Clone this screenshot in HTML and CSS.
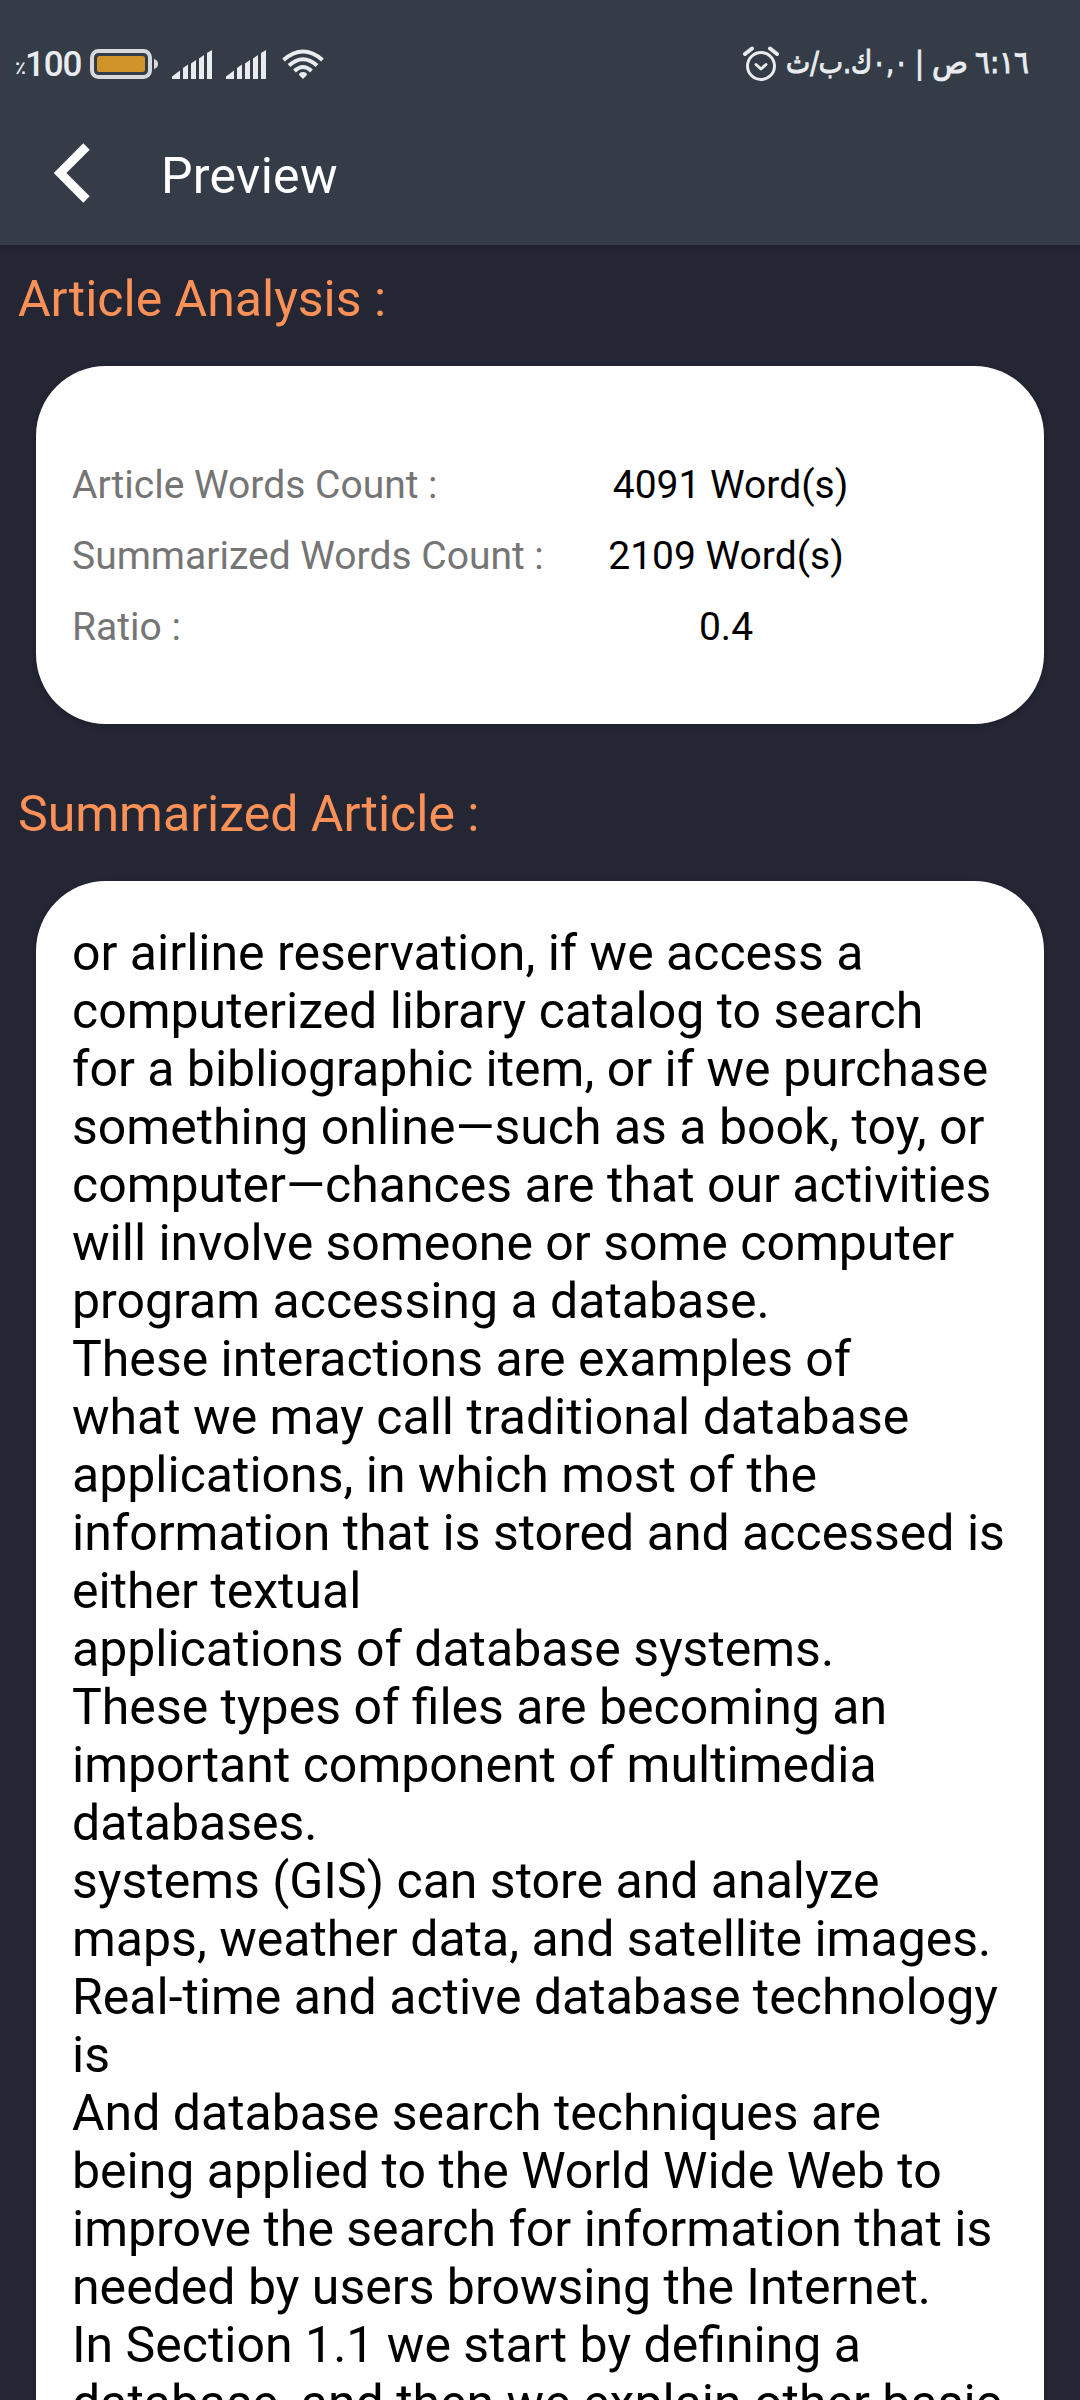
FILE: index.html
```html
<!DOCTYPE html>
<html lang="en">
<head>
<meta charset="utf-8">
<title>Preview</title>
<link rel="stylesheet" href="styles.css">
</head>
<body>
<div class="screen">
  <header class="top">
    <div class="status">
      <div class="status-left">
        <span class="percent">٪</span><span class="level">100</span>
        <svg class="battery" width="68" height="30" viewBox="0 0 68 30">
          <rect x="2" y="2" width="58" height="26" rx="6.5" fill="none" stroke="#d5d9dc" stroke-width="4"/>
          <rect x="7" y="7" width="48" height="16" rx="2.5" fill="#d09329"/>
          <path d="M64 10q4 1 4 5t-4 5z" fill="#d5d9dc"/>
        </svg>
        <svg class="signal" width="40" height="29" viewBox="0 0 40 29" fill="#e9ebee">
          <path d="M0 29v-2.500l8-6V29zM11 29V18l5-3.500V29zM19 29V13.500l5-3.500V29zM27 29V8.500l5-3.500V29zM35 29V3l5-3v29z"/>
        </svg>
        <svg class="signal" width="40" height="29" viewBox="0 0 40 29" fill="#e9ebee">
          <path d="M0 29v-2.500l8-6V29zM11 29V18l5-3.500V29zM19 29V13.500l5-3.500V29zM27 29V8.500l5-3.500V29zM35 29V3l5-3v29z"/>
        </svg>
        <svg class="wifi" width="42" height="31" viewBox="0 0 42 31" fill="none" stroke="#e9ebee" stroke-width="4">
          <path d="M1.500 11Q21-6 40.500 11M7 16.500Q21 4 35 16.500M12.500 22Q21 14 29.500 22"/>
          <path d="M21 30l-4-4q0-3 4-3t4 3z" fill="#e9ebee" stroke="none"/>
        </svg>
      </div>
      <div class="status-right">
        <svg class="alarm" width="36" height="36" viewBox="0 0 36 36" fill="none" stroke="#e9ebee" stroke-width="3" stroke-linecap="round" stroke-linejoin="round">
          <circle cx="18" cy="20" r="13.500"/>
          <path d="M13 18.500l5 4.500 5-4.500"/>
          <path d="M2 8l7-5.500M34 8l-7-5.500" stroke-width="4"/>
        </svg>
        <svg class="clock" width="246" height="56" viewBox="0 0 246 56">
          <text x="1" y="37" textLength="122" lengthAdjust="spacingAndGlyphs">٠,٠ك.ب/ث</text>
          <text x="130" y="37" textLength="9" lengthAdjust="spacingAndGlyphs">|</text>
          <text x="147" y="37" textLength="36" lengthAdjust="spacingAndGlyphs">ص</text>
          <text x="190" y="37" textLength="54" lengthAdjust="spacingAndGlyphs">٦:١٦</text>
        </svg>
      </div>
    </div>
    <div class="toolbar">
      <svg class="back" width="36" height="60" viewBox="0 0 36 60" fill="none" stroke="#fff" stroke-width="9">
        <path d="M32.500 3.500L6 30l26.500 26.500"/>
      </svg>
      <h1 class="title">Preview</h1>
    </div>
  </header>
  <main class="content">
    <h2 class="heading">Article Analysis :</h2>
    <section class="card stats">
      <div class="row"><span class="label">Article Words Count :</span><span class="value value-first">4091 Word(s)</span></div>
      <div class="row"><span class="label">Summarized Words Count :</span><span class="value">2109 Word(s)</span></div>
      <div class="row"><span class="label">Ratio :</span><span class="value">0.4</span></div>
    </section>
    <h2 class="heading">Summarized Article :</h2>
    <section class="card article">
      <p class="text">or airline reservation, if we access a<br>
computerized library catalog to search<br>
for a bibliographic item, or if we purchase<br>
something online—such as a book, toy, or<br>
computer—chances are that our activities<br>
will involve someone or some computer<br>
program accessing a database.<br>
These interactions are examples of<br>
what we may call traditional database<br>
applications, in which most of the<br>
information that is stored and accessed is<br>
either textual<br>
applications of database systems.<br>
These types of files are becoming an<br>
important component of multimedia<br>
databases.<br>
systems (GIS) can store and analyze<br>
maps, weather data, and satellite images.<br>
Real-time and active database technology<br>
is<br>
And database search techniques are<br>
being applied to the World Wide Web to<br>
improve the search for information that is<br>
needed by users browsing the Internet.<br>
In Section 1.1 we start by defining a<br>
database, and then we explain other basic</p>
    </section>
  </main>
</div>
</body>
</html>
```
FILE: styles.css
```css
* { box-sizing: border-box; margin: 0; padding: 0; }
body { background: #242634; font-family: Roboto, "Liberation Sans", sans-serif; }
.screen { width: 1080px; height: 2400px; overflow: hidden; display: flex; flex-direction: column; }
.top { height: 245px; flex: none; background: #343d47; box-shadow: 0 1px 6px rgba(0, 0, 0, .2); }
.status { height: 128px; padding: 0 49px 0 15px; display: flex; justify-content: space-between; align-items: center; color: #e9ebee; }
.status-left, .status-right { display: flex; align-items: center; }
.percent { width: 10px; font: bold 18px "DejaVu Sans", sans-serif; padding-top: 6px; }
.level { width: 58px; font-size: 35px; font-weight: 500; letter-spacing: -1.2px; }
.battery { margin-left: 7px; }
.signal { margin-left: 14px; }
.wifi { margin-left: 16px; }
.alarm { margin-right: 6px; }
.clock { font: 31px "DejaVu Sans", sans-serif; fill: #e9ebee; stroke: #e9ebee; stroke-width: 1px; }
.toolbar { height: 117px; padding-left: 54px; display: flex; align-items: flex-start; }
.back { margin-top: 15px; }
.title { margin: 19px 0 0 71px; color: #fff; font-size: 50px; font-weight: 400; line-height: 58px; letter-spacing: .3px; }
.content { flex: 1; min-height: 0; display: flex; flex-direction: column; }
.heading { flex: none; margin: 25px 0 0 18px; color: #fc9157; font-size: 50px; font-weight: 400; line-height: 58px; }
.card { flex: none; margin: 38px 36px 0; padding: 0 36px; background: #fff; border-radius: 70px; box-shadow: 0 2px 6px rgba(0, 0, 0, .2); }
.stats { height: 358px; padding-top: 84px; margin-bottom: 36px; }
.row { display: flex; height: 71px; align-items: center; font-size: 39px; line-height: 45px; }
.label { width: 474px; color: #757575; white-space: nowrap; }
.value { width: 360px; color: #000; text-align: center; }
.value-first { padding-left: 9px; }
.article { height: 1600px; padding-top: 43px; }
.text { color: #000; font-size: 50px; line-height: 58px; white-space: nowrap; }
```
